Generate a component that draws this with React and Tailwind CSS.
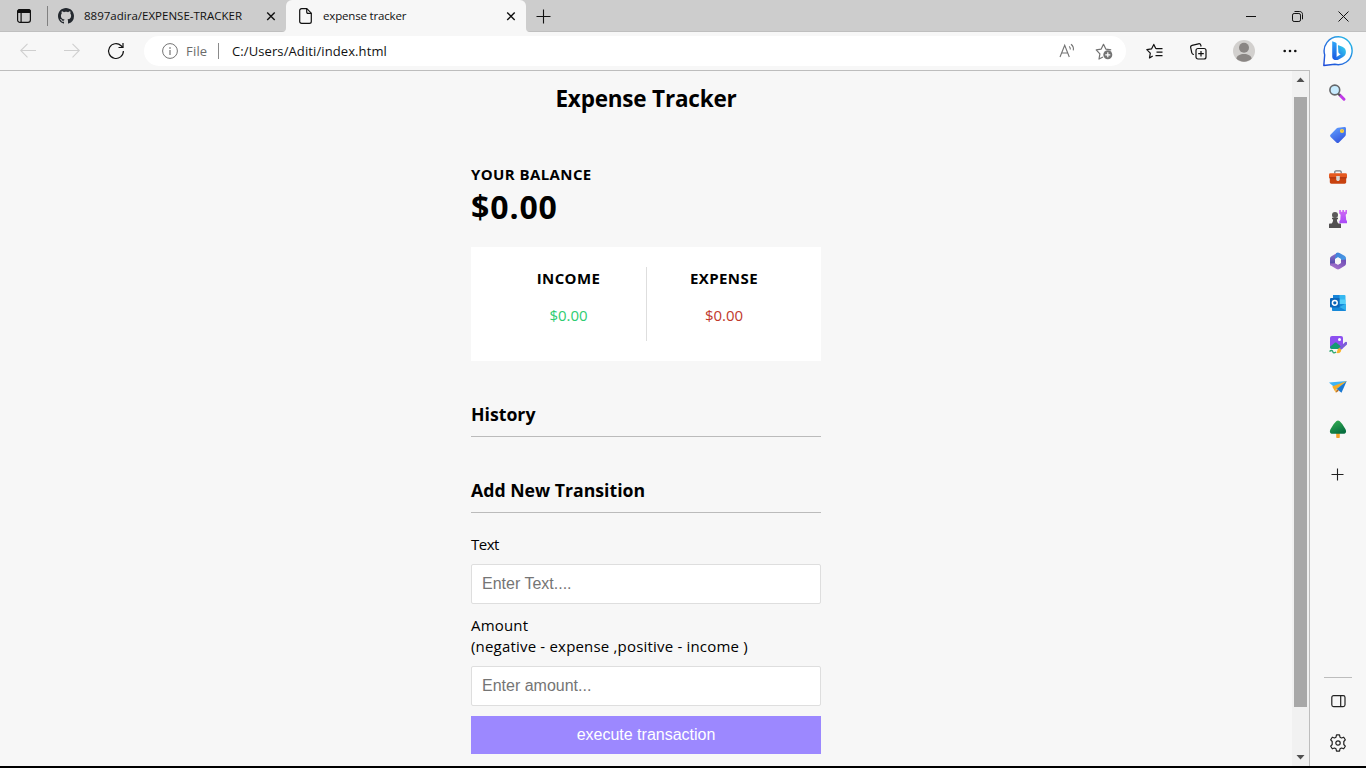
import React from "react";

const Svg = ({ className = "", w = 16, h = w, children, ...rest }) => (
  <svg
    width={w}
    height={h}
    viewBox={`0 0 ${w} ${h}`}
    fill="none"
    className={`block shrink-0 ${className}`}
    {...rest}
  >
    {children}
  </svg>
);

const TabClose = ({ className }) => (
  <Svg w={10} className={className} stroke="#111" strokeWidth="1.4">
    <path d="M1.2 1.5 8.700 9M8.700 1.500 1.200 9" />
  </Svg>
);

function TitleBar() {
  return (
    <div className="flex h-8 items-center bg-[#cdcdcd] shadow-[inset_0_-1px_0_#bfbfbf]">
      <Svg w={16} className="ml-4" stroke="#111" strokeWidth="1.2">
        <rect x="1.6" y="1.6" width="12.8" height="12.8" rx="2.4" />
        <path d="M1.6 4.4V3.8c0-1.3.9-2.2 2.2-2.2h8.4c1.3 0 2.2.9 2.2 2.2v.6z" fill="#111" />
        <path d="M5.1 4.5v9.8" />
      </Svg>
      <div className="ml-[15px] h-5 w-px bg-[#808080]" />
      <Svg w={16} className="ml-[10px]">
        <path
          fill="#24292f"
          d="M8 0C3.58 0 0 3.58 0 8c0 3.54 2.29 6.53 5.47 7.59.4.07.55-.17.55-.38 0-.19-.01-.82-.01-1.49-2.01.37-2.53-.49-2.69-.94-.09-.23-.48-.94-.82-1.13-.28-.15-.68-.52-.01-.53.63-.01 1.08.58 1.23.82.72 1.21 1.87.87 2.33.66.07-.52.28-.87.51-1.07-1.78-.2-3.64-.89-3.64-3.95 0-.87.31-1.59.82-2.15-.08-.2-.36-1.02.08-2.12 0 0 .67-.21 2.2.82.64-.18 1.32-.27 2-.27s1.36.09 2 .27c1.53-1.04 2.2-.82 2.2-.82.44 1.1.16 1.92.08 2.12.51.56.82 1.27.82 2.15 0 3.07-1.87 3.75-3.65 3.95.29.25.54.73.54 1.48 0 1.07-.01 1.93-.01 2.2 0 .21.15.46.55.38A8.013 8.013 0 0 0 16 8c0-4.42-3.58-8-8-8z"
        />
      </Svg>
      <div className="ml-[10px] w-[182px] whitespace-nowrap text-[11.5px] leading-4 tracking-[0.01px]">
        8897adira/EXPENSE-TRACKER
      </div>
      <TabClose />
      <div className="ml-[6px] flex h-8 shrink-0 items-end">
        <Svg w={4}>
          <path d="M4 0v4H0c2.6 0 4-1.4 4-4z" fill="#f7f7f7" />
        </Svg>
        <div className="flex h-8 w-[240px] items-center rounded-t-[6px] bg-[#f7f7f7]">
          <Svg w={13} h={16} className="ml-[13px]" stroke="#111" strokeWidth="1.2">
            <path d="M2.6.7h5.2l4.5 4.5v8.2c0 1.1-.8 1.9-1.9 1.9H2.6C1.5 15.3.7 14.5.7 13.4V2.6C.7 1.5 1.5.7 2.6.7z" />
            <path d="M7.7.9v3.2c0 .8.5 1.3 1.3 1.3h3.2" />
          </Svg>
          <div className="ml-[11px] w-[183px] text-[11.5px] leading-4 tracking-[-0.17px]">expense tracker</div>
          <TabClose />
        </div>
        <Svg w={4}>
          <path d="M0 0v4h4C1.4 4 0 2.6 0 0z" fill="#f7f7f7" />
        </Svg>
      </div>
      <Svg w={15} className="ml-[6px]" stroke="#111" strokeWidth="1.1">
        <path d="M7.5.5v14M.5 7.500h14" />
      </Svg>
      <div className="grow" />
      <Svg w={10} stroke="#111">
        <path d="M0 5.500h10" />
      </Svg>
      <Svg w={11} className="ml-9" stroke="#111">
        <rect x=".5" y="2.5" width="8" height="8" rx="1.6" />
        <path d="M2.5.5h5.200c1.600 0 2.800 1.200 2.800 2.800v5" />
      </Svg>
      <Svg w={11} className="ml-[35px] mr-[17px]" stroke="#111">
        <path d="M.5.5l10 10M10.5.5l-10 10" />
      </Svg>
    </div>
  );
}

function Toolbar() {
  return (
    <div className="flex h-[38px] items-center bg-[#f7f7f7]">
      <Svg w={16} className="ml-5" stroke="#cfcfcf" strokeWidth="1.1">
        <path d="M16 7.500H.8M7.500.8.7 7.500l6.800 6.800" />
      </Svg>
      <Svg w={16} className="ml-7" stroke="#cfcfcf" strokeWidth="1.1">
        <path d="M0 7.500h15.200M8.500.8l6.800 6.700-6.800 6.800" />
      </Svg>
      <Svg w={18} className="ml-[27px]" stroke="#111" strokeWidth="1.2">
        <path d="M16.400 9a7.400 7.400 0 1 1-2.300-5.300L16 5.500" />
        <path d="M16 1v4.500h-4.500" />
      </Svg>
      <div className="ml-[19px] flex h-[30px] w-[982px] items-center rounded-full bg-white">
        <Svg w={16} className="ml-[18px]" stroke="#747474">
          <circle cx="8" cy="8" r="7.4" />
          <path d="M8 7v5" strokeWidth="1.2" />
          <path d="M8 4.200v1.500" strokeWidth="1.4" />
        </Svg>
        <div className="ml-2 w-8 text-[13px] leading-5 tracking-[0.2px] text-[#6b6b6b]">File</div>
        <div className="h-4 w-px bg-[#8a8a8a]" />
        <div className="ml-[13px] grow whitespace-nowrap text-[13px] leading-5 tracking-[0.1px] text-[#111]">
          C:/Users/Aditi/index.html
        </div>
        <Svg w={16} className="mr-5" stroke="#737373" strokeWidth="1.1">
          <path d="M1 14 5.700 2.200 10.300 14M2.600 10h6.200" />
          <path d="M10.200 3.300c.9.800 1.300 1.900 1.100 3.200M12 1.300c2 1.500 2.800 3.600 2.300 6" />
        </Svg>
        <Svg w={18} className="mr-[13px]" stroke="#737373" strokeWidth="1.2">
          <path d="M8 15l-4 2 .9-5.100L1.200 7.900l5-.8L8.500 2.300l2.300 4.800 5.400.8" strokeLinejoin="round" />
          <circle cx="12.800" cy="12.800" r="4.500" fill="#737373" stroke="none" />
          <path d="M12.800 10.300v5M10.300 12.800h5" stroke="#fff" />
        </Svg>
      </div>
      <Svg w={17} className="ml-5" stroke="#111" strokeWidth="1.2">
        <path d="M6.700 13 3.500 14.900l.8-4.800L.8 6.600l4.700-.7L7.800 1.400 9.900 5.700" strokeLinejoin="round" />
        <path d="M9.900 5.600h6.600M10.500 9.100h6M9.500 12.600h7" />
      </Svg>
      <Svg w={17} className="ml-[27px]" stroke="#111" strokeWidth="1.2">
        <rect x="6" y="5.500" width="10" height="10.500" rx="2" />
        <path d="M11 8v5.500M8.200 10.700h5.600" />
        <path d="M4 11.500c-1.200-.1-1.900-.7-2.200-1.700L.7 4.700c-.3-1.200.3-2.100 1.400-2.400L8.400.8c1.200-.3 2.100.3 2.400 1.400l.3 1.300" />
      </Svg>
      <Svg w={22} className="ml-[26px]">
        <circle cx="11" cy="11" r="11" fill="#d2d0ce" />
        <circle cx="11" cy="7.800" r="5" fill="#8a8684" />
        <path d="M3.300 18.600C4 15.500 7 14 11 14s7 1.500 7.700 4.600A11 11 0 0 1 3.300 18.600z" fill="#8a8684" />
      </Svg>
      <Svg w={14} h={4} className="ml-7">
        <circle cx="1.700" cy="2" r="1.300" fill="#111" />
        <circle cx="7" cy="2" r="1.300" fill="#111" />
        <circle cx="12.300" cy="2" r="1.300" fill="#111" />
      </Svg>
    </div>
  );
}

function PageScrollbar() {
  return (
    <div className="flex w-[17px] shrink-0 flex-col items-center bg-[#f1f1f1]">
      <Svg w={9} h={5} className="mt-[6px]">
        <path d="M.5 5 4.500.5 8.500 5z" fill="#505050" />
      </Svg>
      <div className="mt-[15px] h-[610px] w-[13px] bg-[#a8a8a8]" />
      <div className="grow" />
      <Svg w={9} h={5} className="mb-[6px]">
        <path d="M.5 0h8L4.500 4.500z" fill="#505050" />
      </Svg>
    </div>
  );
}

const inputClass =
  "block h-10 w-full rounded-[2px] border border-[#dedede] bg-white px-[10px] font-['Liberation_Sans',Arial,sans-serif] text-[16px] leading-5 outline-none placeholder:text-[#757575]";

function Tracker() {
  return (
    <div className="flex grow flex-col items-center bg-[#f7f7f7] text-black">
      <h2 className="mt-3 h-8 whitespace-nowrap text-[22.5px] font-bold leading-8 tracking-[-0.2px]">
        Expense Tracker
      </h2>
      <div className="mt-[49px] w-[350px]">
        <h4 className="h-5 whitespace-nowrap text-[15px] font-bold leading-5 tracking-[0.4px]">YOUR BALANCE</h4>
        <h1 className="mt-[3px] h-10 text-[32px] font-bold leading-10 tracking-[0.9px]">$0.00</h1>
        <div className="mt-5 flex h-[114px] bg-white p-5 text-center">
          <div className="w-[156px] border-r border-[#dedede]">
            <h4 className="h-[22px] text-[15px] font-bold leading-[22px] tracking-[0.4px]">INCOME</h4>
            <p className="mt-[15px] text-[15px] leading-[22px] text-[#2ecc71]">$0.00</p>
          </div>
          <div className="w-[154px]">
            <h4 className="h-[22px] text-[15px] font-bold leading-[22px] tracking-[0.4px]">EXPENSE</h4>
            <p className="mt-[15px] text-[15px] leading-[22px] text-[#c0392b]">$0.00</p>
          </div>
        </div>
        <h3 className="mt-10 h-9 border-b border-[#bbb] text-[17.7px] font-bold leading-[26px]">History</h3>
        <h3 className="mt-10 h-9 border-b border-[#bbb] text-[17.7px] font-bold leading-[26px]">
          Add New Transition
        </h3>
        <form>
          <label className="mt-[21px] block h-[21px] text-[15px] leading-[21px] tracking-[-0.5px]">Text</label>
          <input className={`mt-[9px] ${inputClass}`} placeholder="Enter Text...." />
          <label className="mt-[11px] block h-[42px] whitespace-nowrap text-[15px] leading-[21px] tracking-[0.19px]">
            Amount
            <br />
            (negative - expense ,positive - income )
          </label>
          <input className={`mt-[9px] ${inputClass}`} placeholder="Enter amount..." />
          <button
            type="button"
            className="mt-[10px] block h-[38px] w-full bg-[#9c88ff] font-['Liberation_Sans',Arial,sans-serif] text-[16px] leading-5 text-white"
          >
            execute transaction
          </button>
        </form>
      </div>
    </div>
  );
}

function Sidebar() {
  return (
    <div className="flex w-14 shrink-0 flex-col items-center bg-[#f7f7f7]">
      <Svg w={32} className="mt-[3px]">
        <defs>
          <linearGradient id="bubble" x1="0" y1="1" x2="1" y2="0">
            <stop offset="0" stopColor="#1b48d8" />
            <stop offset=".5" stopColor="#2a7de0" />
            <stop offset="1" stopColor="#22c4e8" />
          </linearGradient>
          <linearGradient id="bing" x1="0" y1="0" x2="0" y2="1">
            <stop offset="0" stopColor="#2fa8f8" />
            <stop offset="1" stopColor="#1a55e0" />
          </linearGradient>
          <linearGradient id="bingSwoosh" x1="0" y1="1" x2="1" y2="0">
            <stop offset="0" stopColor="#1a50e6" />
            <stop offset="1" stopColor="#36d8ee" />
          </linearGradient>
        </defs>
        <path
          d="M16.500 1.700a14 14 0 1 1-3.700 27.600L1.800 30.500l.9-10.600A14.200 14.200 0 0 1 16.500 1.700z"
          fill="#fff"
          stroke="url(#bubble)"
          strokeWidth="1.4"
          strokeLinejoin="round"
        />
        <path d="M10.200 6.300l3.400 1.100c.7.200 1 .7 1 1.400v14.500l-1.300 1.500c-2-.2-3.100-1.500-3.100-3.300z" fill="url(#bing)" />
        <path
          d="M16 11.500c-.3-.9.200-1.400 1.100-1.100l3.300 1.300c2.300 1 3.500 2.800 3.500 5.300 0 2.200-1 3.900-2.900 5l-4.300 2.500c-2.500 1.300-5.300.3-6.200-1.800 1.200.5 2.600.2 4-.6l4.200-2.800-1.200-.6c-.7-.3-.9-.8-1.100-1.400z"
          fill="url(#bingSwoosh)"
        />
      </Svg>
      <Svg w={18} className="mt-[17px]">
        <path d="M11 11.200l4 4" stroke="#c03ae8" strokeWidth="3" strokeLinecap="round" />
        <path d="M9 9.500l2 2" stroke="#555" strokeWidth="2" />
        <circle cx="5.800" cy="6" r="4.900" fill="#c8ecff" stroke="#65676a" strokeWidth="1.6" />
      </Svg>
      <Svg w={18} className="mt-6">
        <defs>
          <linearGradient id="tag" x1=".2" y1="0" x2=".7" y2="1">
            <stop offset="0" stopColor="#62a0ff" />
            <stop offset="1" stopColor="#3153dc" />
          </linearGradient>
        </defs>
        <path d="M9 1.800 15.400 1c1-.1 1.600.6 1.600 1.500l-.2 6.300c0 .6-.3 1.100-.7 1.500l-6.200 6.200c-.8.8-1.800.8-2.500 0l-5.700-5.400c-.8-.8-.8-1.800 0-2.500l5.800-6.100c.4-.4.9-.6 1.500-.7z" fill="url(#tag)" />
        <circle cx="13" cy="5" r="2.100" fill="#ffd43b" />
        <circle cx="13.200" cy="4.800" r=".8" fill="#d9b040" />
      </Svg>
      <Svg w={18} className="mt-6">
        <path d="M5.800 5.500V4c0-.7.500-1.200 1.200-1.200h4c.7 0 1.200.5 1.200 1.200v1.500" stroke="#77797d" strokeWidth="1.3" />
        <rect x="0" y="5.300" width="18" height="5.200" rx="1.400" fill="#e65a20" />
        <path d="M.8 9.800h16.400v4.300c0 .9-.7 1.600-1.600 1.600H2.400c-.9 0-1.600-.7-1.600-1.600z" fill="#c8420f" />
        <path d="M.5 9.800h17" stroke="#a63010" />
        <path d="M7.200 8h3.600v3.200c0 1-.8 1.800-1.800 1.800s-1.800-.8-1.800-1.800z" fill="#d9d5d2" />
      </Svg>
      <Svg w={18} className="mt-6">
        <defs>
          <linearGradient id="rook" x1="0" y1="0" x2="0" y2="1">
            <stop offset="0" stopColor="#d16bf4" />
            <stop offset="1" stopColor="#a848f8" />
          </linearGradient>
        </defs>
        <path d="M10.200 0h1.700v1.700h1.400V0H15v1.700h1.400V0H18v3.600l-1.300 1.100.5 5.400.8 1v2.200h-7.600v-2.200l.9-1 .3-5.400-1.400-1.100z" fill="url(#rook)" />
        <circle cx="6" cy="5" r="3" fill="#5c5a5b" />
        <path d="M3 7.700h6v1.600H7.900c0 2 .5 3.400 1.500 4.200h1.900c.4 0 .7.4.7.9V18H0v-3.600c0-.5.3-.9.7-.9h1.900c1-.8 1.500-2.200 1.500-4.200H3z" fill="#514f50" />
      </Svg>
      <Svg w={18} className="mt-6">
        <defs>
          <linearGradient id="officeA" x1="0" y1="0" x2="0" y2="1">
            <stop offset="0" stopColor="#8f72cc" />
            <stop offset="1" stopColor="#4a43a4" />
          </linearGradient>
          <linearGradient id="officeB" x1="0" y1="0" x2="1" y2="1">
            <stop offset="0" stopColor="#3f7fd8" />
            <stop offset="1" stopColor="#4ba0e8" />
          </linearGradient>
          <linearGradient id="officeC" x1="0" y1="1" x2="1" y2="0">
            <stop offset="0" stopColor="#b27ad2" />
            <stop offset="1" stopColor="#6a4cb4" />
          </linearGradient>
        </defs>
        <path d="M8 .9 2.500 4.200C1.500 4.800 1 5.600 1 6.800v5.400c0 1.100 1 1.500 1.900 1L6 11.400V7L9.500 1.800z" fill="url(#officeA)" />
        <path d="M7.200.9c1.200-.7 2.200-.7 3.300 0l4.900 2.900c1 .6 1.600 1.500 1.600 2.700v4.300L12 8.500V7L9 5.200 5.800 7z" fill="url(#officeB)" />
        <path d="M17 7.500v3.800c0 1.300-.6 2.200-1.600 2.800l-4.900 3c-1 .6-2 .6-3 0l-5-3C1.600 13.500 1 12.600 1 11.500l5-.3 3 1.600 3-1.800V8z" fill="url(#officeC)" />
        <path d="M6.100 7.200 9 5.500l2.900 1.700v3.500L9 12.500l-2.900-1.800z" fill="#f7f7f7" />
      </Svg>
      <Svg w={18} className="mt-6">
        <rect x="4" y="1" width="12.500" height="9" rx="1" fill="#35b8f1" />
        <path d="M4 1h6.500v5H4z" fill="#1784d8" />
        <path d="M10.500 5.500h6V11h-6z" fill="#55d0fa" />
        <path d="M3 10h14v6c0 .6-.4 1-1 1H4c-.6 0-1-.4-1-1z" fill="#1688d8" />
        <path d="M17 9.400v7.200L10.500 13z" fill="#32b1ec" />
        <rect x="1" y="4" width="9.600" height="9.600" rx="1" fill="#0b65b8" />
        <circle cx="5.800" cy="8.800" r="2.400" stroke="#fff" strokeWidth="1.5" />
      </Svg>
      <Svg w={18} className="mt-6">
        <rect x="1" y="0" width="13" height="13" rx="2" fill="#8d50f0" />
        <path d="M1 10.800 5.500 7c.7-.6 1.600-.6 2.300 0L12 10.500 9.500 13H3c-1.200 0-2-.8-2-2z" fill="#159b72" />
        <circle cx="10.500" cy="3.500" r="1.500" fill="#fff" />
        <path d="M.5 15.500c1.700-1.500 3-1.200 3.300.2s1.300 1.800 3.200.3" stroke="#28a66d" strokeWidth="1.3" />
        <path d="M11.500 12.500 17 7.400" stroke="#7b5ed8" strokeWidth="3" strokeLinecap="round" />
        <path d="M9.500 12.400c1.600-.6 3.300 1.100 2.500 2.800-.8 1.800-2.700 2.400-4.800 1.600 1.400-.9.7-3.500 2.300-4.400z" fill="#f8b52d" />
      </Svg>
      <Svg w={18} className="mt-6">
        <path d="M0 4.500 17.700 3 8 11.500z" fill="#3fb4f4" />
        <path d="M17.700 3 12.500 14.800 7.800 11z" fill="#1978d2" />
        <path d="M3.200 8.500 17.700 3 6.800 11.500v3.200z" fill="#f7ad26" />
        <path d="M6.800 14.700l1-3.600 2 1.600z" fill="#bb6710" />
      </Svg>
      <Svg w={18} className="mt-6">
        <defs>
          <linearGradient id="tree" x1="0" y1="0" x2=".5" y2="1">
            <stop offset="0" stopColor="#39b454" />
            <stop offset="1" stopColor="#087040" />
          </linearGradient>
        </defs>
        <path d="M7.200 12.500h3.600V17c0 .6-.4 1-1 1H8.200c-.6 0-1-.4-1-1z" fill="#f4a329" />
        <path d="M7.500.9c1-.7 2-.7 3 0 1.800 1.600 4 4.600 6 8.300 1.300 2.700.4 4.500-2 4.500h-11c-2.400 0-3.300-1.800-2-4.500 2-3.700 4.200-6.700 6-8.300z" fill="url(#tree)" />
      </Svg>
      <Svg w={13} className="mr-px mt-[30px]" stroke="#222" strokeWidth="1.1">
        <path d="M6.500.5v12M.5 6.500h12" />
      </Svg>
      <div className="grow" />
      <div className="h-px w-7 bg-[#bdbdbd]" />
      <Svg w={15} h={13} className="mt-[17px]" stroke="#222" strokeWidth="1.2">
        <rect x=".8" y=".6" width="13.200" height="11" rx="1.800" />
        <path d="M9.700.6v11" />
      </Svg>
      <Svg w={18} className="mb-[14px] mt-[26px]" stroke="#222" strokeWidth="1.2">
        <circle cx="9" cy="9" r="2.200" />
        <path
          strokeLinejoin="round"
          d="M7.500.9h3l.5 2.300 1.500.8 2.200-.8 1.600 2.600-1.500 1.700v3l1.500 1.700-1.600 2.600-2.200-.8-1.500.8-.5 2.300h-3L7 14.800 5.500 14l-2.200.8-1.600-2.600 1.500-1.700v-3L1.700 5.800l1.600-2.600 2.200.8L7 3.200z"
        />
      </Svg>
    </div>
  );
}

export default function App() {
  return (
    <div className="flex h-[768px] w-[1366px] flex-col overflow-hidden border-b-2 border-black bg-[#f7f7f7] font-['Open_Sans','Noto_Sans',sans-serif] text-[#111]">
      <TitleBar />
      <div className="flex min-h-0 grow">
        <div className="flex w-[1310px] shrink-0 flex-col">
          <Toolbar />
          <div className="flex min-h-0 grow border-r border-t border-[#bdbdbd]">
            <Tracker />
            <PageScrollbar />
          </div>
        </div>
        <Sidebar />
      </div>
    </div>
  );
}
